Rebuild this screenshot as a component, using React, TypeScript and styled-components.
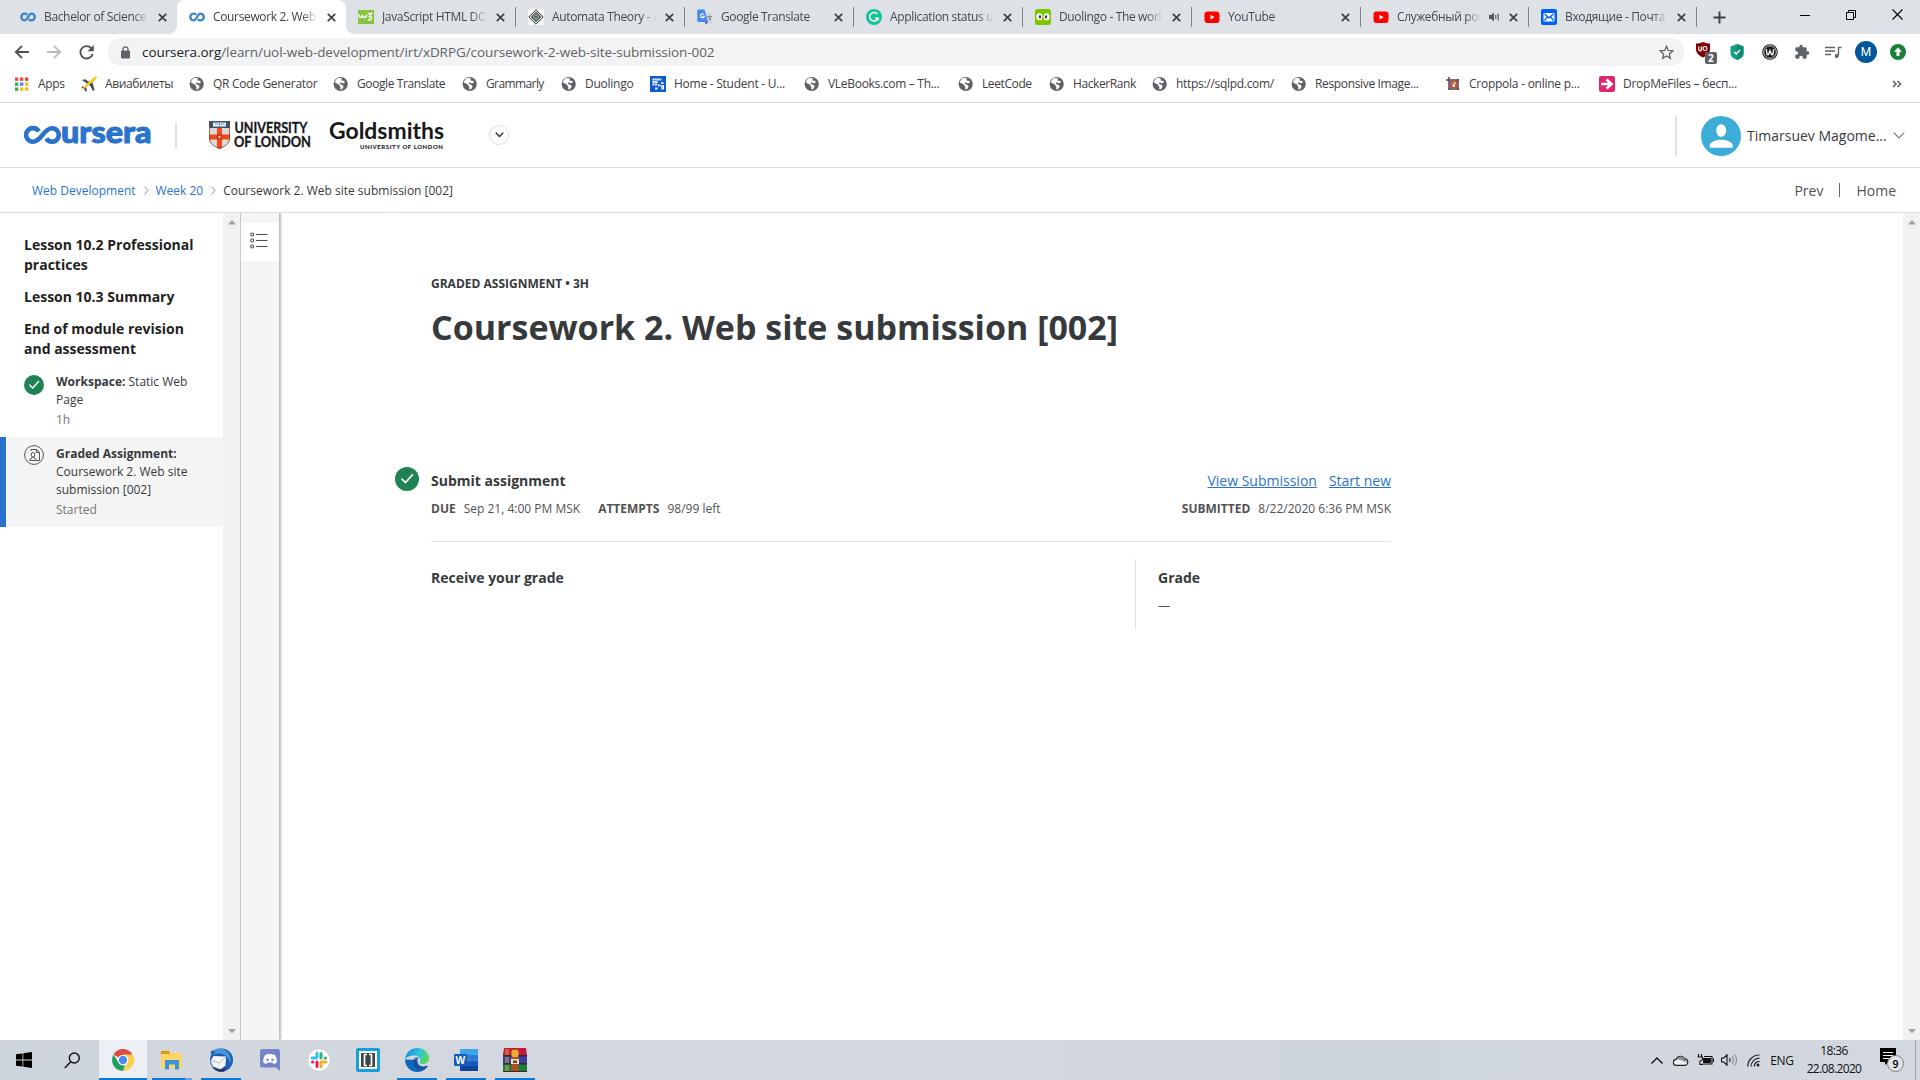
import React from "react";
import styled, { createGlobalStyle, css } from "styled-components";

const Global = createGlobalStyle`
  *, *::before, *::after { box-sizing: border-box; }
  html, body { margin: 0; padding: 0; background: #fff; }
  body { font-family: "Open Sans", "Noto Sans", sans-serif; color: #373a3c; overflow: hidden; }
  svg { display: block; flex: none; }
`;

const Screen = styled.div`
  width: 1920px;
  height: 1080px;
  display: flex;
  flex-direction: column;
  overflow: hidden;
  background: #fff;
`;

/* ---------- Browser chrome ---------- */
const TabStrip = styled.div`
  height: 34px;
  display: flex;
  background: #dee1e6;
  padding-left: 8px;
`;
const Tab = styled.div<{ $active?: boolean; $line?: boolean; $w?: number }>`
  width: ${(p) => p.$w ?? 169}px;
  height: 34px;
  display: flex;
  align-items: center;
  padding: 0 ${(p) => (p.$line ? 8 : 7)}px 0 12px;
  position: relative;
  font-size: 12px;
  color: ${(p) => (p.$active ? "#3c4043" : "#45494d")};
  ${(p) =>
    p.$active &&
    css`
      background: #fff;
      border-radius: 8px 8px 0 0;
      &::before,
      &::after {
        content: "";
        position: absolute;
        bottom: 0;
        width: 8px;
        height: 8px;
      }
      &::before {
        left: -8px;
        background: radial-gradient(circle at 0 0, #dee1e6 7.5px, #fff 8px);
      }
      &::after {
        right: -8px;
        background: radial-gradient(circle at 100% 0, #dee1e6 7.5px, #fff 8px);
      }
    `}
  ${(p) =>
    p.$line &&
    css`
      &::after {
        content: "";
        position: absolute;
        right: 0;
        top: 7px;
        width: 1px;
        height: 20px;
        background: #808387;
      }
    `}
`;
const TabTitle = styled.span<{ $ls?: number }>`
  flex: 1;
  margin-left: 8px;
  letter-spacing: ${(p) => p.$ls ?? -0.35}px;
  overflow: hidden;
  white-space: nowrap;
  line-height: 18px;
  mask-image: linear-gradient(to right, #000 calc(100% - 16px), transparent);
`;
const AudioSlot = styled.span`
  margin-left: 8px;
`;
const TabClose = styled.span`
  width: 16px;
  display: flex;
  justify-content: center;
  margin-left: 5px;
`;
const NewTab = styled.div`
  width: 44px;
  display: flex;
  align-items: center;
  justify-content: center;
`;
const WindowButtons = styled.div`
  margin-left: auto;
  display: flex;
  height: 29px;
`;
const WindowButton = styled.div`
  width: 46px;
  display: flex;
  align-items: center;
  justify-content: center;
`;
const Toolbar = styled.div`
  height: 36px;
  display: flex;
  align-items: center;
  padding: 0 6px 0 14px;
`;
const NavIcon = styled.div<{ $w?: number }>`
  width: ${(p) => p.$w ?? 32}px;
  display: flex;
`;
const Omnibox = styled.div`
  width: 1576px;
  height: 28px;
  margin-left: -2px;
  border-radius: 14px;
  background: #f1f3f4;
  display: flex;
  align-items: center;
  padding: 0 10px 0 12px;
`;
const Url = styled.span`
  flex: 1;
  margin-left: 11px;
  font-size: 13.5px;
  line-height: 20px;
  letter-spacing: -0.065px;
  color: #5f6368;
  b { font-weight: 400; color: #202124; }
`;
const Extensions = styled.div`
  margin-left: auto;
  display: flex;
  align-items: center;
`;
const Extension = styled.div<{ $w: number }>`
  width: ${(p) => p.$w}px;
  display: flex;
  justify-content: center;
`;
const BookmarkBar = styled.div`
  height: 33px;
  display: flex;
  align-items: center;
  padding: 0 18px 4px 14px;
  border-bottom: 1px solid #d6d8db;
`;
const Bookmark = styled.div<{ $w: number; $ls?: number }>`
  width: ${(p) => p.$w}px;
  display: flex;
  align-items: center;
  gap: 8px;
  font-size: 12px;
  line-height: 18px;
  letter-spacing: ${(p) => p.$ls ?? -0.3}px;
  white-space: nowrap;
  color: #3c4043;
`;
const More = styled.div`
  margin-left: auto;
`;

/* ---------- Site header ---------- */
const Header = styled.header`
  height: 65px;
  display: flex;
  align-items: center;
  border-bottom: 1px solid #dcdcdc;
  padding: 0 15px 0 24px;
`;
const Rule = styled.div<{ $h: number; $w?: number; $c?: string }>`
  width: ${(p) => p.$w ?? 2}px;
  height: ${(p) => p.$h}px;
  background: ${(p) => p.$c ?? "#e1e1e1"};
`;
const Logos = styled.div`
  display: flex;
  align-items: center;
`;
const BrandSlot = styled.div`margin-right: 23px;`;
const CrestSlot = styled.div`margin: 0 4px 0 32px;`;
const GoldSlot = styled.div`margin-left: 17px;`;
const Expander = styled.div`
  width: 20px;
  height: 20px;
  margin-left: 44px;
  border: 1px solid #ddd;
  border-radius: 50%;
  display: flex;
  align-items: center;
  justify-content: center;
`;
const Account = styled.div`
  margin-left: auto;
  display: flex;
  align-items: center;
  font-size: 14px;
  padding-top: 1px;
`;
const AccountName = styled.span`
  width: 146px;
  margin-left: 6px;
  line-height: 20px;
  white-space: nowrap;
  color: #373a3c;
`;
const AvatarSlot = styled.div`margin-left: 24px;`;
const Crumbs = styled.nav`
  height: 45px;
  display: flex;
  align-items: center;
  border-bottom: 1px solid #dcdcdc;
  padding: 0 24px 0 32px;
  font-size: 12px;
`;
const Crumb = styled.span<{ $link?: boolean }>`
  color: ${(p) => (p.$link ? "#2a73cc" : "#373a3c")};
  white-space: nowrap;
`;
const CrumbArrow = styled.span`
  width: 20px;
  padding-left: 1px;
  display: flex;
  justify-content: center;
`;
const Pager = styled.div`
  margin-left: auto;
  display: flex;
  align-items: center;
  gap: 16px;
  font-size: 14px;
  color: #525252;
`;

/* ---------- Content ---------- */
const Body = styled.div`
  height: 827px;
  display: flex;
`;
const Sidebar = styled.aside`
  width: 223px;
  padding-top: 22px;
`;
const Lesson = styled.h3<{ $last?: boolean }>`
  margin: 0 0 ${(p) => (p.$last ? 6 : 12)}px;
  padding: 0 24px;
  font-size: 14px;
  font-weight: 700;
  line-height: 20px;
  color: #1f1f1f;
`;
const Item = styled.div<{ $active?: boolean }>`
  display: flex;
  height: ${(p) => (p.$active ? 90 : 72)}px;
  padding: ${(p) => (p.$active ? "8px 10px 0 18px" : "8px 10px 0 24px")};
  border-left: ${(p) => (p.$active ? "6px solid #2a73cc" : "0")};
  background: ${(p) => (p.$active ? "#f5f5f5" : "#fff")};
  font-size: 12px;
  line-height: 18px;
  color: #373a3c;
  & > svg { margin-top: ${(p) => (p.$active ? 0 : 2)}px; }
`;
const ItemText = styled.div`
  margin-left: 12px;
  width: 150px;
  b { font-weight: 700; }
`;
const ItemMeta = styled.div`
  margin-top: 2px;
  color: #757575;
`;
const ScrollTrack = styled.div`
  width: 17px;
  background: #f1f1f1;
  display: flex;
  flex-direction: column;
  justify-content: space-between;
  align-items: center;
  padding: 7px 0 6px;
`;
const Rail = styled.div`
  width: 39px;
  background: #f5f5f5;
  border-left: 1px solid #c8c8c8;
  box-shadow: 2px 0 2px rgba(0, 0, 0, 0.27);
  clip-path: inset(0 -6px 0 0);
  padding-top: 10px;
`;
const RailButton = styled.div`
  height: 38px;
  background: #fff;
  padding: 9px 0 0 9px;
`;
const Main = styled.main`
  flex: 1;
  padding: 62px 0 0 116px;
`;
const Kicker = styled.div`
  margin-left: 36px;
  font-size: 12px;
  font-weight: 700;
  line-height: 18px;
`;
const Title = styled.h1`
  margin: 8px 0 0 36px;
  font-size: 34px;
  font-weight: 700;
  line-height: 52px;
  color: #373a3c;
`;
const Step = styled.section`
  width: 996px;
  margin-top: 112px;
  display: flex;
  & > svg { margin-top: 2px; }
`;
const StepBody = styled.div`
  flex: 1;
  margin-left: 12px;
  height: 77px;
  border-bottom: 1px solid #e1e1e1;
`;
const Line = styled.div<{ $top?: number }>`
  display: flex;
  justify-content: space-between;
  align-items: center;
  margin-top: ${(p) => p.$top ?? 0}px;
`;
const Strong = styled.div`
  font-size: 14px;
  font-weight: 700;
  line-height: 20px;
  padding-top: 6px;
  color: #373a3c;
`;
const Links = styled.div`
  display: flex;
  gap: 12px;
  font-size: 14px;
  line-height: 20px;
  padding-top: 6px;
`;
const Anchor = styled.a`
  color: #2a73cc;
  text-decoration: underline;
`;
const Facts = styled.div`
  display: flex;
  gap: 8px;
  font-size: 12px;
  line-height: 18px;
  color: #525252;
  b { font-weight: 700; }
  b:nth-of-type(2) { margin-left: 10px; }
`;
const GradeRow = styled.section`
  width: 960px;
  margin: 17px 0 0 36px;
  display: flex;
  height: 71px;
`;
const GradeLeft = styled.div`
  width: 704px;
  padding-top: 3px;
`;
const GradeRight = styled.div`
  flex: 1;
  border-left: 1px solid #e1e1e1;
  padding: 3px 0 0 22px;
`;
const Dash = styled.div`
  font-size: 12px;
  line-height: 18px;
  margin-top: 9px;
  color: #525252;
`;

/* ---------- Taskbar ---------- */
const Taskbar = styled.footer`
  height: 40px;
  display: flex;
  background: linear-gradient(90deg, #ccd4de 0, #d2d7de 10%, #d3d7df 30%, #d5d9df 45%, #cfd5dd 70%, #d3d8e0 100%);
`;
const StartSlot = styled.div<{ $w: number; $pr?: number }>`
  width: ${(p) => p.$w}px;
  padding-right: ${(p) => p.$pr ?? 0}px;
  display: flex;
  align-items: center;
  justify-content: center;
`;
const TaskButton = styled.div<{ $active?: boolean; $open?: boolean; $more?: boolean }>`
  width: ${(p) => (p.$active ? 48 : 40)}px;
  margin-right: ${(p) => (p.$active ? 5 : 9)}px;
  padding-top: 2px;
  display: flex;
  align-items: center;
  justify-content: center;
  background: ${(p) => (p.$active ? "#eceff3" : "transparent")};
  border-bottom: 2px solid transparent;
  ${(p) => p.$open && css`border-bottom-color: #0a78d6;`}
  ${(p) =>
    p.$more &&
    css`
      border-image: linear-gradient(90deg, #0a78d6 80%, #60a7e0 80%) 1;
    `}
`;
const Tray = styled.div`
  margin-left: auto;
  display: flex;
  align-items: center;
  color: #111;
  font-size: 12px;
`;
const TrayIcon = styled.div<{ $w: number }>`
  width: ${(p) => p.$w}px;
  display: flex;
  justify-content: center;
`;
const Lang = styled.div`
  width: 34px;
  text-align: center;
  letter-spacing: -0.3px;
`;
const Clock = styled.div`
  width: 70px;
  text-align: center;
  line-height: 18px;
  letter-spacing: -0.65px;
  font-size: 12px;
`;
const DesktopEdge = styled.div`
  width: 5px;
  height: 40px;
  border-left: 1px solid #9ba3ad;
`;

/* ---------- Icons ---------- */
const CourseraMark = () => (
  <svg width="16" height="16" viewBox="0 0 16 16" fill="none" stroke="#3b86cd" strokeWidth="2.4">
    <path d="M7.2 5.6C6.4 4.7 5.5 4.6 4.7 4.6a3.4 3.4 0 0 0 0 6.8c3.2 0 3.5-6.8 6.7-6.8a3.4 3.4 0 0 1 0 6.8c-1 0-1.8-.4-2.5-1.2" />
  </svg>
);
const Close = () => (
  <svg width="9" height="9" viewBox="0 0 9 9" stroke="#3c4043" strokeWidth="1.7">
    <path d="M.8.8l7.4 7.4M8.2.8L.8 8.2" />
  </svg>
);
const W3 = () => (
  <svg width="16" height="16" viewBox="0 0 16 16">
    <rect y="1" width="16" height="14" fill="#86c440" />
    <path d="M.8 5.500c.3 4 3 3.800 3.500.5.300 3.300 4 3.600 4.400-.5M10 4.500h3.600L11.500 7.500c3 0 3 4-1.700 3.500" fill="none" stroke="#fff" strokeWidth="1.500" />
  </svg>
);
const Automata = () => (
  <svg width="16" height="16" viewBox="0 0 16 16">
    <rect width="16" height="16" fill="#f7f7f7" />
    <path d="M8 .8L15.200 8 8 15.200.8 8z" fill="#f2f2f2" stroke="#333" strokeWidth="1" />
    <path d="M8 3.500L12.500 8 8 12.500 3.500 8z" fill="#8fb39b" stroke="#444" strokeWidth="1.100" />
    <path d="M6 8h4M8 6.500v3" stroke="#444" strokeWidth=".9" />
  </svg>
);
const GTranslate = () => (
  <svg width="16" height="16" viewBox="0 0 16 16">
    <path d="M6 4h9.500v11H9z" fill="#d4d7db" />
    <path d="M8 13h3l-2.200 2.800z" fill="#3554b8" />
    <path d="M1 .5h6.500L11 13H1.500Q.3 13 .3 12V1.500Q.3.5 1 .5z" fill="#4a86f0" />
    <path d="M7 5.400a2 2 0 1 0 .4 1.800H5.500" fill="none" stroke="#fff" strokeWidth="1.100" />
    <path d="M10.500 7.500h4M12.500 6.500v1M14 7.500c-.6 2-1.500 3-2.500 3.800M11.400 8.500c.5 1.200 1.500 2.200 2.600 2.800" fill="none" stroke="#6d7480" strokeWidth=".9" />
  </svg>
);
const GrammarlyG = () => (
  <svg width="16" height="16" viewBox="0 0 16 16">
    <circle cx="8" cy="8" r="8" fill="#15c39a" />
    <path d="M11.300 5A4.300 4.300 0 1 0 12 9.200H9M12 9v2.500" fill="none" stroke="#fff" strokeWidth="1.500" />
  </svg>
);
const Duo = () => (
  <svg width="16" height="16" viewBox="0 0 16 16">
    <rect width="16" height="16" rx="3" fill="#78c800" />
    <rect x="1.500" y="4.300" width="5.800" height="7" rx="2.900" fill="#fff" />
    <rect x="8.700" y="4.300" width="5.800" height="7" rx="2.900" fill="#fff" />
    <rect x="4" y="6.200" width="2" height="3.300" rx="1" fill="#333" />
    <rect x="10" y="6.200" width="2" height="3.300" rx="1" fill="#333" />
    <path d="M6.500 10h3L8 12.500z" fill="#ff9600" />
  </svg>
);
const YT = () => (
  <svg width="16" height="16" viewBox="0 0 16 16">
    <rect x=".5" y="2.500" width="15" height="11.500" rx="3" fill="#f00" />
    <path d="M6.500 5.800v4.800L10.600 8.200z" fill="#fff" />
  </svg>
);
const MailRu = () => (
  <svg width="16" height="16" viewBox="0 0 16 16">
    <rect width="16" height="16" rx="2" fill="#005ff9" />
    <rect x="2.500" y="4" width="11" height="8.500" rx="1" fill="#fff" />
    <path d="M3.500 5L8 8.800 12.500 5M3.500 11.500L6.300 8M12.500 11.500L9.700 8" fill="none" stroke="#005ff9" strokeWidth="1.300" />
  </svg>
);
const Speaker = () => (
  <svg width="11" height="10" viewBox="0 0 11 10" fill="#555">
    <path d="M0 3h2.200L5 .5v9L2.200 7H0z" />
    <path d="M6.800 3v4M9.200 1.500v7" stroke="#555" strokeWidth="1.100" fill="none" />
  </svg>
);
const Globe = () => (
  <svg width="16" height="16" viewBox="0 0 16 16">
    <circle cx="7.700" cy="8" r="7.100" fill="#5f6368" />
    <path d="M5.500 2.100C4 2.600 2.300 4 1.900 6.300c1 1.400 2.600 1.500 4 2.100.8.500.3 1.400 1 2 .7.300.7 1.500.3 3.200 1.500 0 2.800-1.200 3.200-2.600.4-1.300-.4-2-1.500-2.300C7.600 8.300 6.500 7.800 7 6.800c.6-.7 2-.2 2.600.4 1.500.5 2.800-1 1.700-2.100-.7-.6-2 .1-2.600-.6-.3-.7.300-1.500-.2-2.300-.9-.3-2.100-.4-3-.1z" fill="#fff" />
  </svg>
);
const AppsGrid = () => {
  const c = ["#ea4335", "#ea4335", "#ea4335", "#34a853", "#4285f4", "#fbbc05", "#34a853", "#fbbc05", "#fbbc05"];
  return (
    <svg width="16" height="16" viewBox="0 0 16 16">
      {c.map((f, i) => (
        <rect key={i} x={1 + (i % 3) * 5} y={1.5 + Math.floor(i / 3) * 5} width="3.300" height="3.300" fill={f} />
      ))}
    </svg>
  );
};
const Plane = () => (
  <svg width="16" height="16" viewBox="0 0 16 16">
    <path d="M1 4l3-.8 7 4.500-2 2z" fill="#494b4e" />
    <path d="M8.500 8.500L11.500 6l2 8-1.500 1z" fill="#494b4e" />
    <path d="M1 10.500l4 .5 1 4-1.500.5L3 12.500.5 12z" fill="#494b4e" />
    <path d="M15.800.5c-1.500-.4-3 .8-4 1.800L2.500 11c-.6.8-.3 2 .8 1.500L13.500 4.700C14.800 3.600 16 2 15.800.5z" fill="#fbc713" />
  </svg>
);
const HomeDots = () => (
  <svg width="16" height="16" viewBox="0 0 16 16">
    <rect width="16" height="16" fill="#0f5bd0" />
    <path d="M2.500 2.500h9v2h-9zM2.500 5h5.500v2H2.500zM2.500 7.500h5v2h-5zM11 6h2.500v2H11zM8 8.500h2.500v2H8zM11 9h3v4.500h-3zM5 11.500h3v2H5z" fill="#fff" />
    <path d="M4.700 2v12M7.200 2v12M9.700 2v12M12 2v12" stroke="#0f5bd0" strokeWidth=".5" />
  </svg>
);
const Crop = () => (
  <svg width="16" height="16" viewBox="0 0 16 16">
    <path d="M1 4h13M4 1v12M13 3v11M3 13h11" fill="none" stroke="#4a4650" strokeWidth="1.500" />
    <path d="M4.800 4.800h7.400v7.400H4.800z" fill="#d93f32" />
    <path d="M6 6h2.500v2.500H6z" fill="#4a86f0" />
    <path d="M8.500 6H11v2.500H8.500z" fill="#fbbc05" />
    <path d="M7.500 8.500H10V11H7.500z" fill="#fff" />
  </svg>
);
const Drop = () => (
  <svg width="16" height="16" viewBox="0 0 16 16">
    <rect width="16" height="16" rx="2" fill="#e0256c" />
    <path d="M2 8h9M7.500 3.500L12.500 8l-5 4.500" fill="none" stroke="#fff" strokeWidth="2.600" />
  </svg>
);

const Check = ({ size }: { size: number }) => (
  <svg width={size} height={size} viewBox="0 0 24 24">
    <circle cx="12" cy="12" r="12" fill="#1f8354" />
    <path d="M6.500 11.700l4 3.900 7.500-8.300" fill="none" stroke="#fff" strokeWidth="1.700" />
  </svg>
);
const PeerIcon = () => (
  <svg width="20" height="20" viewBox="0 0 20 20" fill="none" stroke="#525252" strokeWidth="1">
    <circle cx="10" cy="10" r="9.400" />
    <path d="M7 6V4.500h5.500l3 2.800v8.200H12.500M12.300 4.500v3h3" />
    <ellipse cx="9" cy="9.700" rx="1.800" ry="2.300" />
    <path d="M8 11.800v1.500c-1.500.3-2.200.8-2.300 2.200h6.800c-.2-1.400-.9-1.900-2.400-2.200v-1.500" />
  </svg>
);
const Triangle = ({ down }: { down?: boolean }) => (
  <svg width="8" height="5" viewBox="0 0 8 5" fill="#a3a3a3">
    <path d={down ? "M0 0h8L4 4.500z" : "M0 4.500h8L4 0z"} />
  </svg>
);

const CourseraLogo = () => (
  <svg width="128" height="30" viewBox="0 0 128 30">
    <path d="M14.800 11.400A6.800 6.800 0 1 0 9 21.700C17.500 21.700 19.500 8.300 28 8.300A6.700 6.700 0 1 1 22.300 18.500" fill="none" stroke="#2a73cc" strokeWidth="4.600" />
    <text x="37" y="23" textLength="90.500" lengthAdjust="spacingAndGlyphs" fontFamily="Lato" fontWeight="900" fontSize="29.500" fill="#2a73cc" stroke="#2a73cc" strokeWidth="1">ursera</text>
  </svg>
);
const Crest = () => (
  <svg width="21" height="28" viewBox="0 0 21 28">
    <path d="M0 0h21v17c0 6-5 9-10.500 11C5 26 0 23 0 17z" fill="#ddd9d5" />
    <path d="M0 0h21v7H0z" fill="#35566f" />
    <path d="M4 1.500h13v4H4z" fill="#eef3f5" />
    <path d="M5.500 3h4M11.500 3h4M10.500 1.500v4" stroke="#678" strokeWidth=".8" />
    <path d="M8 7h5v20l-2.500 1L8 27zM0 13.500h21v5H0z" fill="#ee4a1f" />
    <circle cx="10.500" cy="16" r="3.200" fill="#cf3719" />
    <circle cx="10.500" cy="16" r="1.200" fill="#f5c7b8" />
    <path d="M.4 0v17c0 5.500 4.500 8.500 10.100 10.500C16 25.500 20.600 22.500 20.600 17V0" fill="none" stroke="#8e3a24" strokeWidth=".8" />
  </svg>
);
const UolText = () => (
  <svg width="78" height="30" viewBox="0 0 78 30" fontFamily="Lato" fontWeight="700" fill="#16181a" stroke="#16181a" strokeWidth=".3">
    <text x="0.500" y="12.800" fontSize="15" textLength="73" lengthAdjust="spacingAndGlyphs">UNIVERSITY</text>
    <text x="0" y="27.400" fontSize="15" textLength="77" lengthAdjust="spacingAndGlyphs">OF LONDON</text>
  </svg>
);
const GoldText = () => (
  <svg width="116" height="32" viewBox="0 0 116 32" fontFamily="Lato" fontWeight="700" fill="#16181a">
    <text x="0" y="20" fontSize="22.500" textLength="115" lengthAdjust="spacingAndGlyphs">Goldsmiths</text>
    <text x="31" y="29.600" fontSize="6" fontWeight="900" textLength="83" lengthAdjust="spacing">UNIVERSITY OF LONDON</text>
  </svg>
);
const Avatar = () => (
  <svg width="40" height="40" viewBox="0 0 40 40">
    <circle cx="20" cy="20" r="20" fill="#3badd9" />
    <ellipse cx="20.200" cy="14.500" rx="5" ry="6.300" fill="#fff" />
    <path d="M8.700 31.700v-2.500c0-3 5.500-5.500 11.500-5.500s11.500 2.500 11.500 5.500v2.500z" fill="#fff" />
  </svg>
);
const SmallArrow = () => (
  <svg width="5" height="9" viewBox="0 0 5 9" fill="none" stroke="#8a8a8a" strokeWidth="1">
    <path d="M.7.7L4 4.500.7 8.300" />
  </svg>
);
const BulletList = () => (
  <svg width="18" height="18" viewBox="0 0 18 18" fill="none" stroke="#525252" strokeWidth="1.100">
    {[2.5, 8.5, 14.5].map((y) => (
      <g key={y}>
        <circle cx="2.200" cy={y} r="1.500" />
        <path d={`M6 ${y}h11.500`} />
      </g>
    ))}
  </svg>
);

/* taskbar icons */
const WinLogo = () => (
  <svg width="16" height="16" viewBox="0 0 16 16">
    <path d="M0 2.300L6.500 1.400v6.200H0zM7.300 1.300L16 0v7.600H7.300zM0 8.400h6.500v6.200L0 13.700zM7.300 8.400H16V16l-8.700-1.300z" />
  </svg>
);
const SearchIcon = () => (
  <svg width="17" height="17" viewBox="0 0 17 17" fill="none" stroke="#111" strokeWidth="1.400">
    <circle cx="10.300" cy="6" r="5" />
    <path d="M6.800 9.700L.8 16" />
  </svg>
);
const ChromeIcon = () => (
  <svg width="22" height="22" viewBox="0 0 22 22">
    <path d="M11 11L1.500 5.500A11 11 0 0 1 20.500 5.500z" fill="#dd4b3e" />
    <path d="M11 5.500h9.500A11 11 0 0 1 10.500 22l5.200-8.500z" fill="#fcd04b" />
    <path d="M11 22A11 11 0 0 1 1.500 5.500L6.500 13.500l4.500 3 2-.3z" fill="#1fa060" />
    <circle cx="11" cy="11" r="5.300" fill="#fff" />
    <circle cx="11" cy="11" r="4.200" fill="#4a8bf0" />
  </svg>
);
const FolderIcon = () => (
  <svg width="22" height="20" viewBox="0 0 22 20">
    <path d="M0 1h8.500l1.500 2h11v15H0z" fill="#fcd468" />
    <path d="M0 1h8l1 3H0z" fill="#dc9a0e" />
    <path d="M4 19.500V10h14v9.500h-4V14.500H8v5z" fill="#3b93d8" />
  </svg>
);
const Thunderbird = () => (
  <svg width="24" height="24" viewBox="0 0 24 24">
    <circle cx="12.500" cy="12" r="11.500" fill="#1d5fb4" />
    <path d="M1 6C4 0 11-.5 15 1.500c5 2.500 8 8 6.500 14C20 9 15 5 9 5.500 6 6 4 7 1 6z" fill="#4795db" />
    <path d="M2 2.500l4 1.500-3 2.500z" fill="#1d4c93" />
    <path d="M1.500 13l3-5L17 8.500l-.5 9-5 4L4 18.500z" fill="#f5f6f8" />
    <path d="M2 12.500l8.500 2.500L16.500 9" fill="none" stroke="#abb3bf" strokeWidth="1" />
    <path d="M3 18c4 4 10 4 14 1l-2 4.500c-5 1-10-1-12-5.500z" fill="#21366b" />
  </svg>
);
const Discord = () => (
  <svg width="20" height="22" viewBox="0 0 20 22">
    <path d="M2 0h15.500Q20 0 20 2.500V22l-4-3.500H2Q0 18.500 0 16V2.500Q0 0 2 0z" fill="#7384c8" />
    <path d="M5 6c3-1.500 7-1.500 10 0 1.500 2.500 2 5 1.700 7.500-1.200 1-2.200 1.300-3.200 1.500l-.8-1.500H7.300L6.500 15c-1-.2-2-.6-3.200-1.500C3 11 3.600 8.500 5 6z" fill="#fff" />
    <circle cx="7.500" cy="10.700" r="1.300" fill="#7384c8" />
    <circle cx="12.500" cy="10.700" r="1.300" fill="#7384c8" />
  </svg>
);
const Slack = () => (
  <svg width="24" height="24" viewBox="0 0 24 24">
    <circle cx="12" cy="12" r="11.400" fill="#fff" stroke="#c1c2c5" strokeWidth=".8" />
    <g strokeWidth="3" strokeLinecap="round">
      <path d="M10 5v4.300M5 10h4.700" stroke="#36c5f0" />
      <path d="M14 5.500v4.500M18.500 10h-.4" stroke="#2eb67d" />
      <path d="M14 19v-4.500M19 14h-4.700" stroke="#ecb22e" />
      <path d="M10 18.500V14M5.500 14h.4" stroke="#e01e5a" />
    </g>
  </svg>
);
const Brackets = () => (
  <svg width="24" height="24" viewBox="0 0 24 24">
    <rect width="24" height="24" rx="2" fill="#169fdb" />
    <rect x="3" y="3" width="18" height="18" fill="#fff" />
    <rect x="5" y="5" width="14" height="14" fill="#3f4446" />
    <path d="M11 6.500H8.500v11H11M13 6.500h2.500v11H13" fill="none" stroke="#fff" strokeWidth="1.700" />
  </svg>
);
const Edge = () => (
  <svg width="24" height="24" viewBox="0 0 24 24">
    <defs>
      <linearGradient id="edgeTop" x1="0" x2="1" y1=".2" y2=".5">
        <stop offset="0" stopColor="#1687d8" />
        <stop offset=".55" stopColor="#2dc3df" />
        <stop offset="1" stopColor="#5bd959" />
      </linearGradient>
    </defs>
    <path d="M0 11.500C0 18 5 24 12 24c4.500 0 8-2 10.500-5.300.4-.7-.2-1.200-1-.8C17 20 12 17.500 12 12z" fill="#0f66bd" />
    <path d="M0 11.500C1 4 6 0 12.500 0 20 0 24 5.500 24 10.500c0 4-3 5.500-6 5.500-2.500 0-4-1-3.200-2.300C16.500 11 14 7.500 9.500 7.500 5 7.500 1.500 9 0 11.500z" fill="url(#edgeTop)" />
    <path d="M9.500 10c-3 4-1 10.500 4.500 11.500 3.300.5 6-.8 8-2.600.5-.6.2-1.300-.8-.9C17 19.500 12.500 17.500 12.500 13c0-1.500.7-2.300 1.500-3-1.500-1-3.500-1-4.500 0z" fill="#134a92" opacity=".7" />
  </svg>
);
const Word = () => (
  <svg width="24" height="24" viewBox="0 0 24 24">
    <path d="M6 1h18v6H6z" fill="#3fa4ee" />
    <path d="M6 7h18v5.500H6z" fill="#2b7cd3" />
    <path d="M6 12.500h18V18H6z" fill="#185abd" />
    <path d="M6 18h18v5H6z" fill="#10439c" />
    <rect y="6" width="13" height="12" rx="1" fill="#185abd" />
    <text x="1.400" y="15.600" fontFamily="Open Sans" fontWeight="700" fontSize="10" fill="#fff">W</text>
  </svg>
);
const Rar = () => (
  <svg width="24" height="24" viewBox="0 0 24 24">
    <path d="M1 0h22l1 7H0z" fill="#c3193e" />
    <path d="M0 8h24v7H0z" fill="#3b3fa2" />
    <path d="M0 16h24v7H0z" fill="#1a7f3f" />
    <path d="M0 7h24v1.500H0zM0 15h24v1.500H0zM0 23h24v1H0z" fill="#3c2430" />
    <path d="M3 1v6M5 1v6M3 9v6M5 9v6M3 17v6M5 17v6" stroke="#e8b331" strokeWidth=".9" />
    <rect x="8.500" y="1" width="7" height="22" fill="#b0501c" />
    <rect x="8.500" y="2" width="7" height="7" rx="2" fill="#efae2d" />
    <path d="M8 11h8v5H8z" fill="#e9e2cf" />
    <path d="M10 12.500h4v2.500h-4z" fill="#704120" />
  </svg>
);

const tabs = [
  { t: "Bachelor of Science i", i: <CourseraMark />, w: 169 },
  { t: "Coursework 2. Web s", i: <CourseraMark />, w: 169, active: true },
  { t: "JavaScript HTML DOM", i: <W3 />, w: 170, line: true },
  { t: "Automata Theory - C", i: <Automata />, w: 169, line: true },
  { t: "Google Translate", i: <GTranslate />, w: 169, line: true },
  { t: "Application status up", i: <GrammarlyG />, w: 169, line: true },
  { t: "Duolingo - The world", i: <Duo />, w: 169, line: true },
  { t: "YouTube", i: <YT />, w: 169, line: true },
  { t: "Служебный ром", i: <YT />, w: 168, line: true, audio: true },
  { t: "Входящие - Почта", i: <MailRu />, w: 168, line: true },
];

const bookmarks = [
  { t: "Apps", i: <AppsGrid />, w: 67 },
  { t: "Авиабилеты", i: <Plane />, w: 108, ls: -0.4 },
  { t: "QR Code Generator", i: <Globe />, w: 144 },
  { t: "Google Translate", i: <Globe />, w: 129, ls: -0.4 },
  { t: "Grammarly", i: <Globe />, w: 99, ls: -0.6 },
  { t: "Duolingo", i: <Globe />, w: 89, ls: -0.25 },
  { t: "Home - Student - U...", i: <HomeDots />, w: 154, ls: -0.25 },
  { t: "VLeBooks.com – Th...", i: <Globe />, w: 154 },
  { t: "LeetCode", i: <Globe />, w: 91, ls: -0.4 },
  { t: "HackerRank", i: <Globe />, w: 103, ls: -0.4 },
  { t: "https://sqlpd.com/", i: <Globe />, w: 139 },
  { t: "Responsive Image...", i: <Globe />, w: 154, ls: -0.35 },
  { t: "Croppola - online p...", i: <Crop />, w: 154, ls: -0.25 },
  { t: "DropMeFiles – бесп...", i: <Drop />, w: 160, ls: -0.25 },
];

export default function App() {
  return (
    <Screen>
      <Global />
      <TabStrip>
        {tabs.map((t) => (
          <Tab key={t.t} $w={t.w} $active={t.active} $line={t.line}>
            {t.i}
            <TabTitle>{t.t}</TabTitle>
            {t.audio && <AudioSlot><Speaker /></AudioSlot>}
            <TabClose><Close /></TabClose>
          </Tab>
        ))}
        <NewTab>
          <svg width="13" height="13" viewBox="0 0 13 13" stroke="#3c4043" strokeWidth="1.900"><path d="M6.500.5v12M.5 6.500h12" /></svg>
        </NewTab>
        <WindowButtons>
          <WindowButton><svg width="10" height="10" stroke="#000"><path d="M0 5.500h10" /></svg></WindowButton>
          <WindowButton><svg width="10" height="10" stroke="#000" fill="none"><path d="M.5 2.500h7v7h-7zM2.500 2.500v-2h7v7h-2" /></svg></WindowButton>
          <WindowButton><svg width="11" height="11" stroke="#000" strokeWidth="1.100"><path d="M.5.5l10 10M10.500.5l-10 10" /></svg></WindowButton>
        </WindowButtons>
      </TabStrip>
      <Toolbar>
        <NavIcon $w={33}><svg width="15" height="14" viewBox="0 0 15 14" fill="none" stroke="#4f5357" strokeWidth="1.900"><path d="M15 7H2M8 .9L1.900 7 8 13.100" /></svg></NavIcon>
        <NavIcon><svg width="15" height="14" viewBox="0 0 15 14" fill="none" stroke="#b9bbbe" strokeWidth="1.900"><path d="M0 7h13M7 .9L13.100 7 7 13.100" /></svg></NavIcon>
        <NavIcon $w={31}><svg width="15" height="15" viewBox="0 0 15 15" fill="none" stroke="#4f5357" strokeWidth="1.900"><path d="M12.300 3.200A6.200 6.200 0 1 0 13.600 9" /><path d="M14.800 0v6.300H8.500z" fill="#4f5357" stroke="none" /></svg></NavIcon>
        <Omnibox>
          <svg width="11" height="13" viewBox="0 0 11 13"><path d="M1.500 5h8v7h-8z" fill="#5f6368" stroke="#5f6368" strokeLinejoin="round" /><path d="M3 5V3.300a2.500 2.500 0 0 1 5 0V5" fill="none" stroke="#5f6368" strokeWidth="1.300" /></svg>
          <Url><b>coursera.org</b>/learn/uol-web-development/irt/xDRPG/coursework-2-web-site-submission-002</Url>
          <svg width="15" height="15" viewBox="0 0 15 15" fill="none" stroke="#5f6368" strokeWidth="1.300"><path d="M7.500 1.300l1.700 4.200 4.600.4-3.500 3 1.100 4.500-3.900-2.400-3.900 2.400 1.100-4.500-3.500-3 4.600-.4z" /></svg>
        </Omnibox>
        <Extensions>
          <Extension $w={32}>
            <svg width="22" height="24" viewBox="0 0 22 24"><path d="M1 3.500C4 3.500 6.500 2.800 8 2c1.500.8 4 1.500 7 1.500V9c0 4-3 6.500-7 8.500C4 15.500 1 13 1 9z" fill="#800000" /><path d="M3.800 6.500v3q0 1.500 1.300 1.500t1.300-1.500v-3M10 6.500a2 2 0 1 1-.1 0z" fill="none" stroke="#fff" strokeWidth="1.200" /><rect x="10" y="12" width="12" height="12" rx="2" fill="#5d6166" /><text x="13" y="21.800" fontFamily="Open Sans" fontWeight="700" fontSize="10" fill="#fff">2</text></svg>
          </Extension>
          <Extension $w={30}>
            <svg width="14" height="16" viewBox="0 0 14 16"><path d="M7 0l6.500 2.500V10c0 3-4 5-6.500 6-2.500-1-6.500-3-6.500-6V2.500z" fill="#14a085" /><path d="M7 0l6.500 2.500V10c0 3-4 5-6.500 6z" fill="#0f8a73" /><path d="M4.300 8l2 2L10 6" fill="none" stroke="#fff" strokeWidth="1.300" /></svg>
          </Extension>
          <Extension $w={35}>
            <svg width="16" height="16" viewBox="0 0 16 16"><circle cx="8" cy="8" r="7.800" fill="#1c1c1c" /><circle cx="8" cy="8" r="6.300" fill="none" stroke="#fff" strokeWidth=".8" /><path d="M4.300 5l.8 5.500h1.400L8 6.500l1.500 4h1.400l.8-5.500" fill="none" stroke="#fff" strokeWidth="1.300" /></svg>
          </Extension>
          <Extension $w={29}>
            <svg width="16" height="16" viewBox="0 0 24 24" fill="#5f6368"><path d="M20.500 11H19V7c0-1.100-.9-2-2-2h-4V3.500a2.500 2.500 0 0 0-5 0V5H4c-1.100 0-2 .9-2 2v3.800h1.500a2.700 2.700 0 0 1 0 5.400H2V20c0 1.100.9 2 2 2h3.800v-1.500a2.700 2.700 0 0 1 5.400 0V22H17c1.100 0 2-.9 2-2v-4h1.500a2.500 2.500 0 0 0 0-5z" /></svg>
          </Extension>
          <Extension $w={35}>
            <svg width="17" height="13" viewBox="0 0 17 13" fill="none" stroke="#5f6368" strokeWidth="1.400"><path d="M0 1.500h10M0 5h10M0 8.500h6M16.500 1.500h-3v8" /><circle cx="11.700" cy="10" r="2" fill="#5f6368" stroke="none" /></svg>
          </Extension>
          <Extension $w={30}>
            <svg width="22" height="22" viewBox="0 0 22 22"><circle cx="11" cy="11" r="11" fill="#01579b" /><text x="11" y="15.200" textAnchor="middle" fontFamily="Roboto" fontSize="12" fill="#fff">M</text></svg>
          </Extension>
          <Extension $w={33}>
            <svg width="16" height="16" viewBox="0 0 16 16"><circle cx="8" cy="8" r="8" fill="#188038" /><path d="M8 3.500l4 4.200H9.500V12h-3V7.700H4z" fill="#fff" /></svg>
          </Extension>
        </Extensions>
      </Toolbar>
      <BookmarkBar>
        {bookmarks.map((b) => (
          <Bookmark key={b.t} $w={b.w} $ls={b.ls}>{b.i}{b.t}</Bookmark>
        ))}
        <More><svg width="10" height="8" viewBox="0 0 10 8" fill="none" stroke="#5f6368" strokeWidth="1.600"><path d="M1 1l3 3-3 3M5.500 1l3 3-3 3" /></svg></More>
      </BookmarkBar>

      <Header>
        <Logos>
          <BrandSlot><CourseraLogo /></BrandSlot>
          <Rule $h={25} />
          <CrestSlot><Crest /></CrestSlot>
          <UolText />
          <GoldSlot><GoldText /></GoldSlot>
          <Expander><svg width="9" height="6" viewBox="0 0 9 6" fill="none" stroke="#333" strokeWidth="1.500"><path d="M.8.8l3.700 3.700L8.200.8" /></svg></Expander>
        </Logos>
        <Account>
          <Rule $h={40} />
          <AvatarSlot><Avatar /></AvatarSlot>
          <AccountName>Timarsuev Magome...</AccountName>
          <svg width="12" height="7" viewBox="0 0 12 7" fill="none" stroke="#777" strokeWidth="1.100"><path d="M.7.7L6 6 11.300.7" /></svg>
        </Account>
      </Header>
      <Crumbs>
        <Crumb $link>Web Development</Crumb>
        <CrumbArrow><SmallArrow /></CrumbArrow>
        <Crumb $link>Week 20</Crumb>
        <CrumbArrow><SmallArrow /></CrumbArrow>
        <Crumb>Coursework 2. Web site submission [002]</Crumb>
        <Pager><span>Prev</span><Rule $h={14} $w={1} $c="#666" /><span>Home</span></Pager>
      </Crumbs>

      <Body>
        <Sidebar>
          <Lesson>Lesson 10.2 Professional practices</Lesson>
          <Lesson>Lesson 10.3 Summary</Lesson>
          <Lesson $last>End of module revision and assessment</Lesson>
          <Item>
            <Check size={20} />
            <ItemText><b>Workspace:</b> Static Web Page<ItemMeta>1h</ItemMeta></ItemText>
          </Item>
          <Item $active>
            <PeerIcon />
            <ItemText><b>Graded Assignment:</b> Coursework 2. Web site submission [002]<ItemMeta>Started</ItemMeta></ItemText>
          </Item>
        </Sidebar>
        <ScrollTrack><Triangle /><Triangle down /></ScrollTrack>
        <Rail><RailButton><BulletList /></RailButton></Rail>
        <Main>
          <Kicker>GRADED ASSIGNMENT • 3H</Kicker>
          <Title>Coursework 2. Web site submission [002]</Title>
          <Step>
            <Check size={24} />
            <StepBody>
              <Line>
                <Strong>Submit assignment</Strong>
                <Links><Anchor>View Submission</Anchor><Anchor>Start new</Anchor></Links>
              </Line>
              <Line $top={9}>
                <Facts><b>DUE</b><span>Sep 21, 4:00 PM MSK</span><b>ATTEMPTS</b><span>98/99 left</span></Facts>
                <Facts><b>SUBMITTED</b><span>8/22/2020 6:36 PM MSK</span></Facts>
              </Line>
            </StepBody>
          </Step>
          <GradeRow>
            <GradeLeft><Strong>Receive your grade</Strong></GradeLeft>
            <GradeRight><Strong>Grade</Strong><Dash>—</Dash></GradeRight>
          </GradeRow>
        </Main>
        <ScrollTrack><Triangle /><Triangle down /></ScrollTrack>
      </Body>

      <Taskbar>
        <StartSlot $w={48}><WinLogo /></StartSlot>
        <StartSlot $w={51} $pr={3}><SearchIcon /></StartSlot>
        <TaskButton $active $open><ChromeIcon /></TaskButton>
        <TaskButton $open $more><FolderIcon /></TaskButton>
        <TaskButton $open><Thunderbird /></TaskButton>
        <TaskButton><Discord /></TaskButton>
        <TaskButton><Slack /></TaskButton>
        <TaskButton><Brackets /></TaskButton>
        <TaskButton $open><Edge /></TaskButton>
        <TaskButton $open><Word /></TaskButton>
        <TaskButton $open><Rar /></TaskButton>
        <Tray>
          <TrayIcon $w={24}><svg width="12" height="7" viewBox="0 0 12 7" fill="none" stroke="#111" strokeWidth="1.400"><path d="M.5 6.500L6 1l5.500 5.500" /></svg></TrayIcon>
          <TrayIcon $w={24}><svg width="16" height="11" viewBox="0 0 16 11"><path d="M3.500 10.400a3 3 0 0 1-.3-6 4.700 4.700 0 0 1 8.600-.6 3.400 3.400 0 0 1 .7 6.600z" fill="#f0f1f3" stroke="#222" strokeWidth="1.200" /><path d="M3.500 4.300a4.700 4.700 0 0 1 8.300-.5l2 4L8 5z" fill="#8a8d91" /></svg></TrayIcon>
          <TrayIcon $w={24}><svg width="17" height="12" viewBox="0 0 17 12" fill="none" stroke="#111"><path d="M1.500 0v3M4.500 0v3M.5 3h5v2q0 1.500-2.500 2v3.500h3M7 2.500h8v7.500H5.500M16.500 4.500v3.500" strokeWidth="1.100" /><path d="M6.500 4.500h7v4h-7z" fill="#111" /></svg></TrayIcon>
          <TrayIcon $w={24}><svg width="17" height="12" viewBox="0 0 17 12" fill="none" stroke="#111" strokeWidth="1.100"><path d="M.6 4h2.200L6 .8v10.400L2.800 8H.6z" /><path d="M8.500 4q1.500 2 0 4" /><path d="M11 2.200q2.800 3.800 0 7.600M13.500.6q4.200 5.400 0 10.800" stroke="#888c92" /></svg></TrayIcon>
          <TrayIcon $w={24}><svg width="13" height="13" viewBox="0 0 13 13" fill="none" stroke="#222" strokeWidth="1.200"><path d="M.8 12.500A11.500 11.500 0 0 1 12.500 1M4 12.500A8.300 8.300 0 0 1 12.500 4.200M7.200 12.500A5.200 5.200 0 0 1 12.500 7.300" /><circle cx="11" cy="11" r="1.500" fill="#222" stroke="none" /></svg></TrayIcon>
          <Lang>ENG</Lang>
          <Clock>18:36<br />22.08.2020</Clock>
          <TrayIcon $w={46}><svg width="24" height="24" viewBox="0 0 24 24"><path d="M0 0h16v14H8.500L5 17v-3H0z" fill="#000" /><path d="M3 4.500h10M3 7.500h10M3 10.500h6" stroke="#fff" strokeWidth="1.200" /><circle cx="15.500" cy="15.500" r="8" fill="#dfe2e6" stroke="#777" strokeWidth=".9" /><text x="15.500" y="19.500" textAnchor="middle" fontFamily="Open Sans" fontWeight="600" fontSize="10.500">9</text></svg></TrayIcon>
          <DesktopEdge />
        </Tray>
      </Taskbar>
    </Screen>
  );
}
